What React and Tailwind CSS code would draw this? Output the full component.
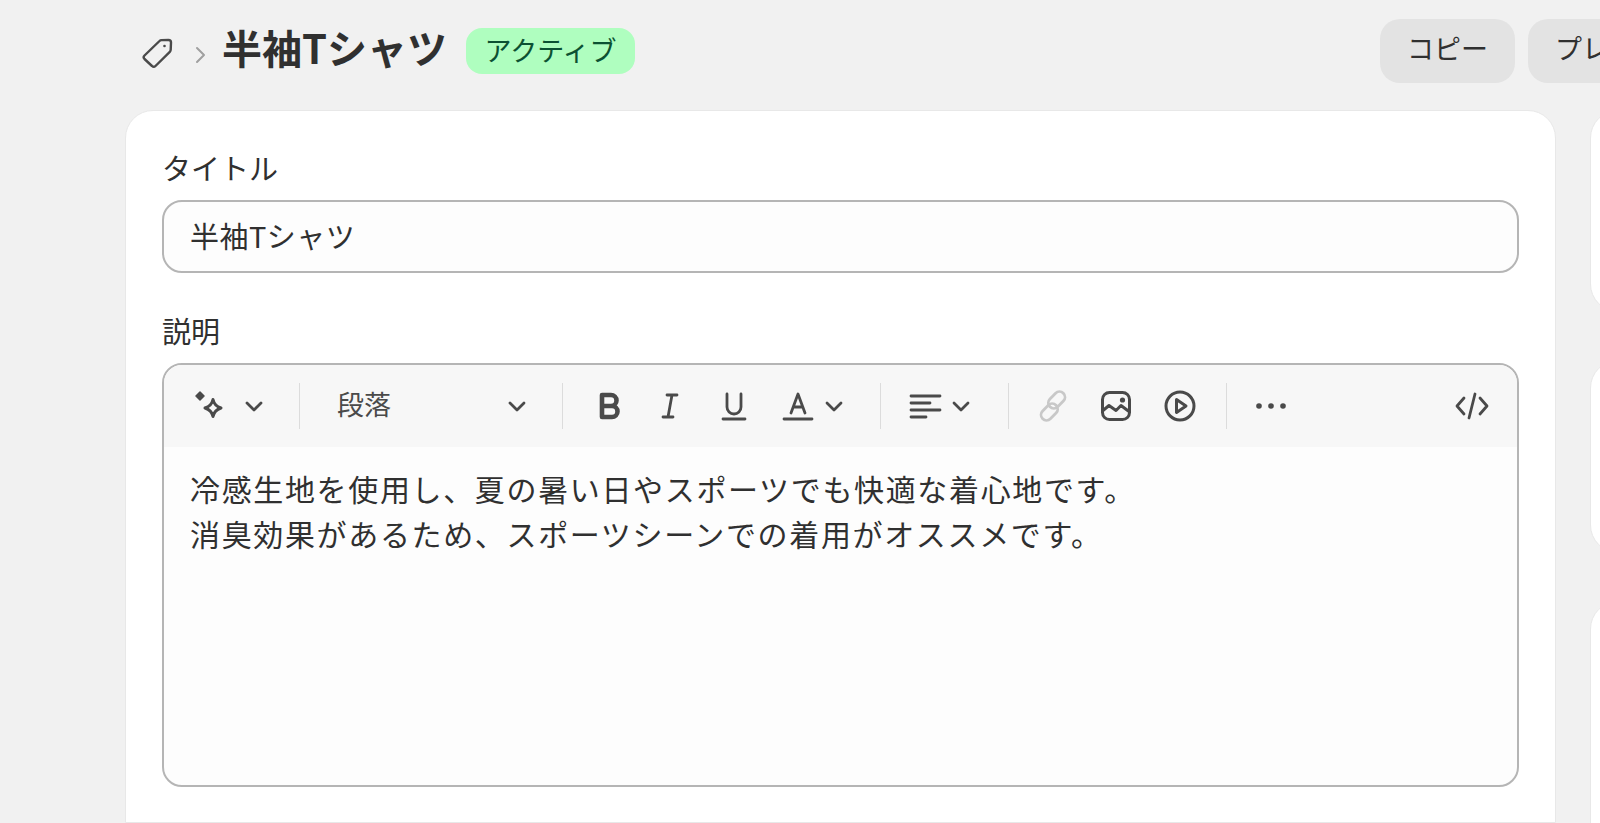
const font = { fontFamily: '"Noto Sans CJK JP", "Noto Sans", sans-serif' };

function Chevron() {
  return (
    <svg width="24" height="24" viewBox="0 0 24 24" fill="none" stroke="#4a4a4a" strokeWidth="2.8" strokeLinecap="round" strokeLinejoin="round">
      <path d="M5 9l7 7 7-7" />
    </svg>
  );
}

function Divider({ className }) {
  return <div className={"w-px h-[46px] bg-[#dcdcdc] shrink-0 " + className} />;
}

function Icon({ className, children, stroke = "#4a4a4a", sw = 2.8 }) {
  return (
    <svg className={"shrink-0 " + className} width="34" height="34" viewBox="0 0 34 34" fill="none" stroke={stroke} strokeWidth={sw} strokeLinecap="round" strokeLinejoin="round">
      {children}
    </svg>
  );
}

export default function App() {
  return (
    <div className="w-[1600px] h-[823px] overflow-hidden bg-[#f1f1f1] text-[#303030]" style={font}>
      <header className="w-[1800px] h-[110px] pl-[141px] flex items-center">
        <svg width="34" height="34" viewBox="0 0 34 34" fill="none" stroke="#4a4a4a" strokeWidth="2.4" strokeLinejoin="round" className="shrink-0 -mt-[6px]">
          <path d="M3.500 20.500 18.500 6a3 3 0 0 1 2-.9l7-.1a2.500 2.500 0 0 1 2.500 2.500l-.3 7.300a3 3 0 0 1-.9 2L14.500 31a2.500 2.500 0 0 1-3.500 0l-7.500-7a2.500 2.500 0 0 1 0-3.500z" />
          <circle cx="23.500" cy="11" r="1.300" fill="#4a4a4a" stroke="none" />
        </svg>
        <svg width="14" height="20" viewBox="0 0 14 20" fill="none" stroke="#a0a0a0" strokeWidth="2" strokeLinecap="round" strokeLinejoin="round" className="ml-[19px] shrink-0">
          <path d="M3 3l7 7-7 7" />
        </svg>
        <h1 className="ml-[14px] text-[40px] font-bold leading-none -mt-[16px] whitespace-nowrap text-[#303030] shrink-0">半袖Tシャツ</h1>
        <span className="ml-[19px] -mt-[8px] h-[46px] w-[169px] pb-[2px] shrink-0 rounded-[16px] bg-[#affebf] text-[#0c5132] text-[27px] flex items-center justify-center whitespace-nowrap">アクティブ</span>
        <div className="ml-[745px] -mt-[9px] flex gap-[13px] shrink-0">
          <button className="px-[27px] pb-[4px] h-[64px] rounded-[20px] bg-[#e3e3e3] text-[27px] whitespace-nowrap">コピー</button>
          <button className="px-[27px] pb-[4px] h-[64px] rounded-[20px] bg-[#e3e3e3] text-[27px] whitespace-nowrap">プレビュー</button>
        </div>
      </header>

      <div className="flex pl-[125px] gap-[34px]">
        <main className="w-[1431px] h-[713px] shrink-0 bg-white rounded-t-[28px] border border-[#e8e8e8] px-[36px] pt-[38px]">
          <label className="block text-[29px] leading-[36px] mb-[15px]">タイトル</label>
          <div className="h-[73px] pb-[2px] rounded-[20px] border-2 border-[#b5b5b5] bg-[#fdfdfd] flex items-center pl-[26px] text-[29px] tracking-[0.5px]">半袖Tシャツ</div>
          <label className="block text-[29px] leading-[36px] mt-[39px] mb-[15px]">説明</label>
          <div className="h-[424px] rounded-[20px] border-2 border-[#b5b5b5] bg-[#fdfdfd] overflow-hidden">
            <div className="h-[82px] bg-[#f7f7f7] flex items-center pl-[29px] pr-[28px]">
              <Icon className="">
                <path d="M7 3 11 7 7 11 3 7z" fill="#4a4a4a" strokeWidth="1.500" />
                <path d="M20 10.500c.9 4.500 2.800 6.800 8 8.500-5.200 1.700-7.100 4-8 8.500-.9-4.500-2.800-6.800-8-8.500 5.200-1.700 7.100-4 8-8.500z" strokeWidth="3" />
              </Icon>
              <div className="ml-[15px] shrink-0"><Chevron /></div>
              <Divider className="ml-[33px]" />
              <span className="ml-[37px] pb-[3px] text-[27px] text-[#4a4a4a] whitespace-nowrap w-[54px]">段落</span>
              <div className="ml-[114px] shrink-0"><Chevron /></div>
              <Divider className="ml-[33px]" />
              <Icon className="ml-[29px]" sw="4.600">
                <path d="M10 6h9a5.500 5.500 0 0 1 0 11h-9zM10 17h10a5.500 5.500 0 0 1 0 11H10z" />
              </Icon>
              <Icon className="ml-[27px]">
                <path d="M14 6h10M10 28h10M19 6l-4 22" />
              </Icon>
              <Icon className="ml-[30px]">
                <path d="M10 5v13a7 7 0 0 0 14 0V5M6 30h22" />
              </Icon>
              <Icon className="ml-[30px]">
                <path d="M10 24 17 5l7 19M12.500 18h9M3 30h28" />
              </Icon>
              <div className="ml-[7px] shrink-0"><Chevron /></div>
              <Divider className="ml-[34px]" />
              <Icon className="ml-[27px]">
                <path d="M3 7h29M3 14h19M3 21h29M3 28h15" />
              </Icon>
              <div className="ml-[7px] shrink-0"><Chevron /></div>
              <Divider className="ml-[35px]" />
              <Icon className="ml-[27px]" stroke="#c8c8c8">
                <rect x="15.500" y="-1" width="11" height="19" rx="5.500" transform="rotate(45 21 8.500) translate(1.500 2)" />
                <rect x="7.500" y="16" width="11" height="19" rx="5.500" transform="rotate(45 13 25.500) translate(-1.500 -2)" />
              </Icon>
              <Icon className="ml-[29px]" sw="3">
                <rect x="3.500" y="3.500" width="27" height="27" rx="7" />
                <path d="M4 21.500l6-5 7 5 5-5 8 6" />
                <circle cx="23.500" cy="11" r="2.600" fill="#4a4a4a" stroke="none" />
              </Icon>
              <Icon className="ml-[30px]" sw="3">
                <circle cx="17" cy="17" r="14" />
                <path d="M13.500 10.500 23 17l-9.500 6.500z" />
              </Icon>
              <Divider className="ml-[29px]" />
              <Icon className="ml-[27px]">
                <circle cx="5" cy="17" r="2.800" fill="#4a4a4a" stroke="none" />
                <circle cx="17" cy="17" r="2.800" fill="#4a4a4a" stroke="none" />
                <circle cx="29" cy="17" r="2.800" fill="#4a4a4a" stroke="none" />
              </Icon>
              <Icon className="ml-auto">
                <path d="M9 9 2 17l7 8M25 9l7 8-7 8M20 5l-6 24" />
              </Icon>
            </div>
            <div className="pl-[26px] pt-[19px] text-[30px] leading-[45px] tracking-[1.650px] text-[#303030]">
              <p className="whitespace-nowrap">冷感生地を使用し、夏の暑い日やスポーツでも快適な着心地です。</p>
              <p className="whitespace-nowrap">消臭効果があるため、スポーツシーンでの着用がオススメです。</p>
            </div>
          </div>
        </main>
        <aside className="w-[400px] shrink-0 flex flex-col gap-[48px]">
          <div className="h-[202px] bg-white rounded-[28px] border border-[#e8e8e8]" />
          <div className="h-[193px] bg-white rounded-[28px] border border-[#e8e8e8]" />
          <div className="h-[300px] bg-white rounded-t-[28px] border border-[#e8e8e8]" />
        </aside>
      </div>
    </div>
  );
}
